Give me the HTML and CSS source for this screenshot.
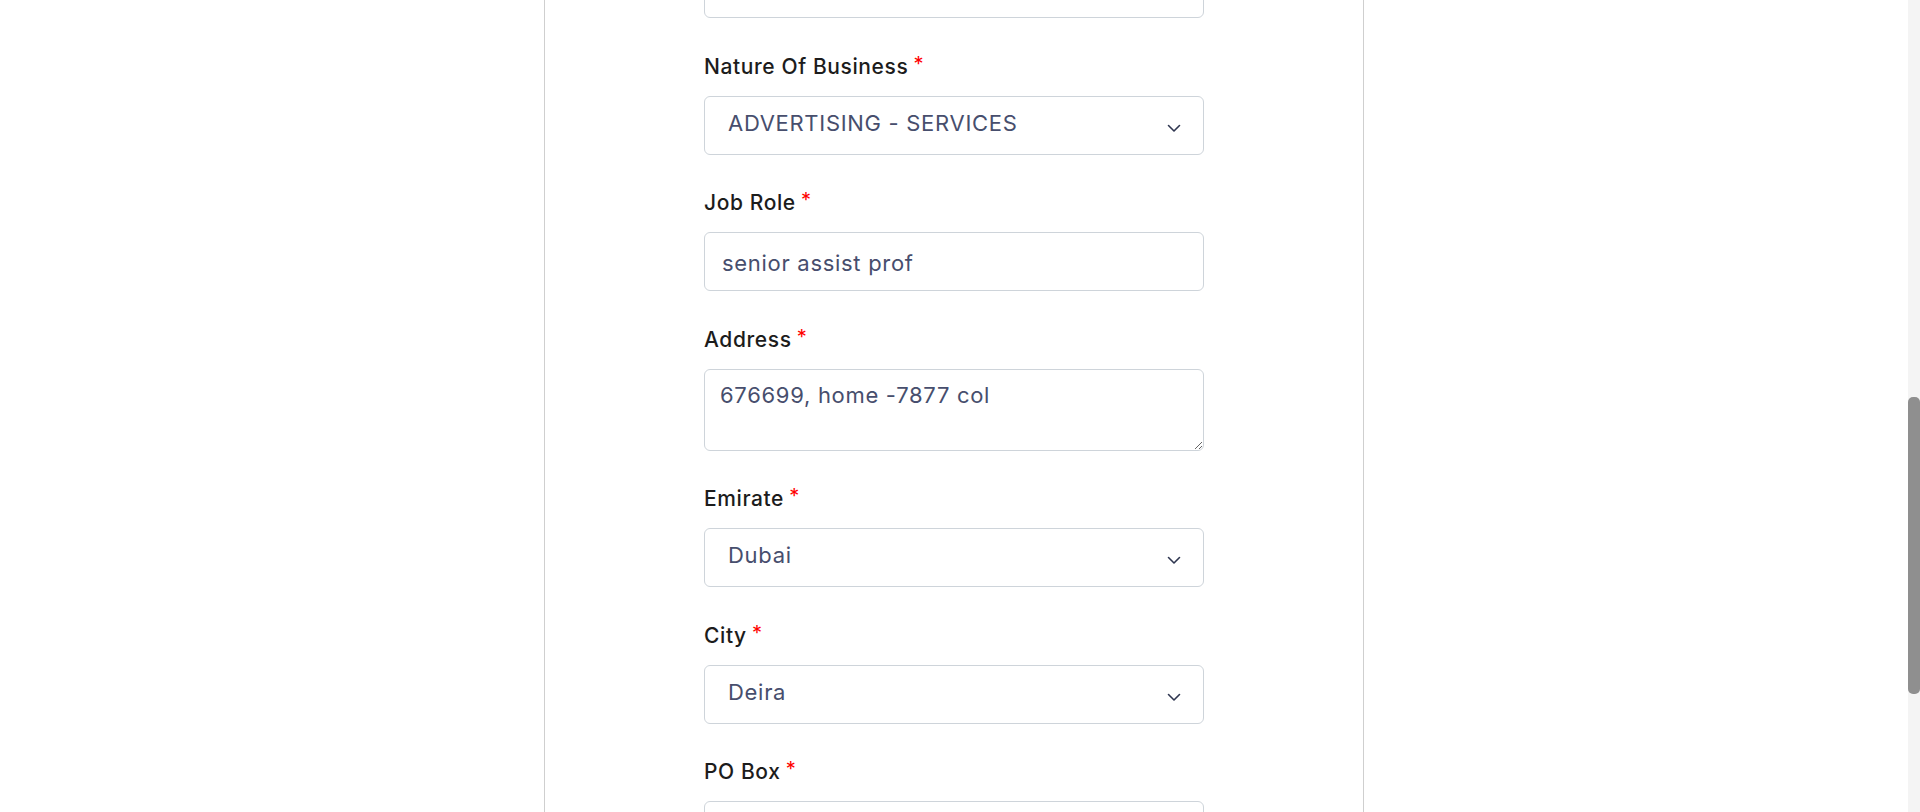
FILE: index.html
```html
<!DOCTYPE html>
<html lang="en">
<head>
<meta charset="utf-8">
<title>Company details</title>
<link rel="stylesheet" href="styles.css">
</head>
<body>
<div class="viewport">
  <main class="panel">
    <form class="form">
      <div class="field first">
        <input class="control" type="text" value="">
      </div>

      <div class="field">
        <label class="label">Nature Of Business <span class="req">*</span></label>
        <div class="select-wrap">
          <select class="control select">
            <option>ADVERTISING - SERVICES</option>
          </select>
          <svg class="chev" width="14" height="9" viewBox="0 0 14 9"><path d="M1.5 1.5 L7 7 L12.5 1.5" fill="none" stroke="#2f3650" stroke-width="1.6" stroke-linecap="round" stroke-linejoin="round"/></svg>
        </div>
      </div>

      <div class="field">
        <label class="label">Job Role <span class="req">*</span></label>
        <input class="control input" type="text" value="senior assist prof">
      </div>

      <div class="field">
        <label class="label">Address <span class="req">*</span></label>
        <textarea class="control textarea">676699, home -7877 col</textarea>
      </div>

      <div class="field">
        <label class="label">Emirate <span class="req">*</span></label>
        <div class="select-wrap">
          <select class="control select">
            <option>Dubai</option>
          </select>
          <svg class="chev" width="14" height="9" viewBox="0 0 14 9"><path d="M1.5 1.5 L7 7 L12.5 1.5" fill="none" stroke="#2f3650" stroke-width="1.6" stroke-linecap="round" stroke-linejoin="round"/></svg>
        </div>
      </div>

      <div class="field">
        <label class="label">City <span class="req">*</span></label>
        <div class="select-wrap">
          <select class="control select">
            <option>Deira</option>
          </select>
          <svg class="chev" width="14" height="9" viewBox="0 0 14 9"><path d="M1.5 1.5 L7 7 L12.5 1.5" fill="none" stroke="#2f3650" stroke-width="1.6" stroke-linecap="round" stroke-linejoin="round"/></svg>
        </div>
      </div>

      <div class="field">
        <label class="label">PO Box <span class="req">*</span></label>
        <input class="control input" type="text" value="">
      </div>
    </form>
  </main>
  <div class="scrollbar"><div class="thumb"></div></div>
</div>
</body>
</html>
```

FILE: styles.css
```css
html, body {
  margin: 0;
  padding: 0;
  height: 100%;
  overflow: hidden;
  background: #ffffff;
}

.viewport {
  display: flex;
  height: 812px;
  overflow: hidden;
}

.panel {
  flex: 1;
  display: flex;
  justify-content: center;
}

.form {
  box-sizing: border-box;
  width: 820px;
  height: 100%;
  border-left: 1px solid #cfcfcf;
  border-right: 1px solid #cfcfcf;
  padding: 0 159px;
  margin: 0;
}

.field {
  display: flex;
  flex-direction: column;
  margin-top: 35.5px;
}

.field.first {
  margin-top: -41px;
}

.label {
  font-family: Inter, "Noto Sans", sans-serif;
  font-size: 21px;
  font-weight: 500;
  line-height: 25px;
  color: #1c1c1c;
  letter-spacing: 0.6px;
  margin-bottom: 17px;
}

.req {
  color: #ff0000;
  font-size: 20px;
  font-weight: 400;
  line-height: 20px;
  vertical-align: top;
  margin-left: -1px;
}

.control {
  box-sizing: border-box;
  width: 500px;
  height: 59px;
  margin: 0;
  border: 1px solid #ced4da;
  border-radius: 6px;
  background: #ffffff;
  font-family: Inter, "Noto Sans", sans-serif;
  font-size: 22px;
  font-weight: 400;
  color: #474e6d;
  letter-spacing: 0.7px;
  outline: none;
}

.input {
  padding: 2px 17px 0;
}

.select-wrap {
  position: relative;
  width: 500px;
}

.select {
  appearance: none;
  -webkit-appearance: none;
  padding: 0 40px 5px 23px;
}

.chev {
  position: absolute;
  right: 23px;
  top: 28px;
  pointer-events: none;
}

.textarea {
  height: 82px;
  padding: 13px 15px;
  resize: vertical;
  line-height: 25px;
}

.scrollbar {
  width: 12px;
  flex: none;
  background: #f4f4f4;
}

.thumb {
  margin-top: 397px;
  height: 297px;
  background: #8f8f8f;
  border-radius: 5px;
}
```
